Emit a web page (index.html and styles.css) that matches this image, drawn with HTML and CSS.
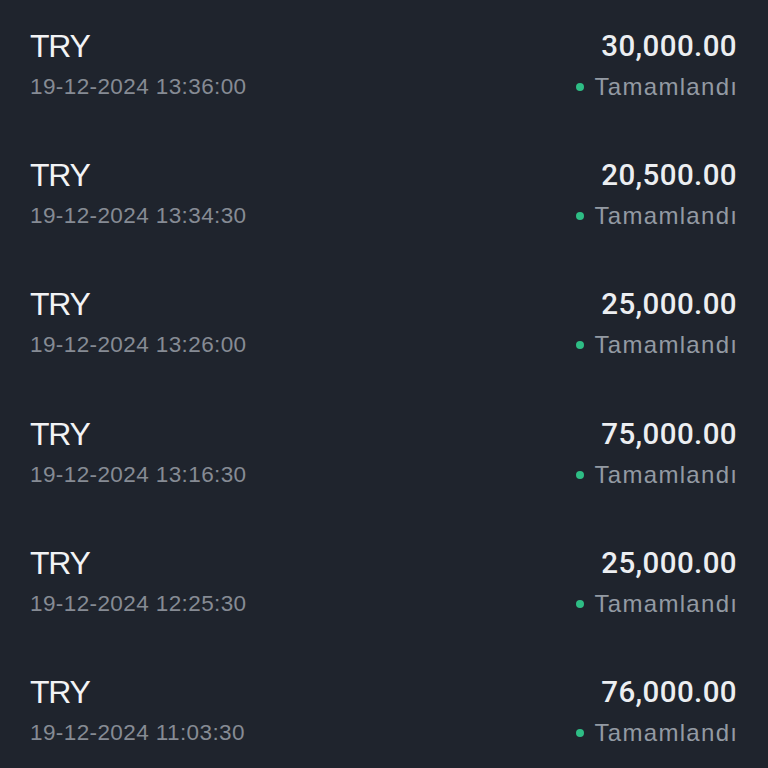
FILE: index.html
```html
<!DOCTYPE html>
<html>
<head>
<meta charset="utf-8">
<link rel="stylesheet" href="styles.css">
</head>
<body>
<div class="list">
  <div class="row">
    <div class="left"><div class="cur">TRY</div><div class="date">19-12-2024 13:36:00</div></div>
    <div class="right"><div class="amt">30,000.00</div><div class="status"><span class="dot"></span>Tamamlandı</div></div>
  </div>
  <div class="row">
    <div class="left"><div class="cur">TRY</div><div class="date">19-12-2024 13:34:30</div></div>
    <div class="right"><div class="amt">20,500.00</div><div class="status"><span class="dot"></span>Tamamlandı</div></div>
  </div>
  <div class="row">
    <div class="left"><div class="cur">TRY</div><div class="date">19-12-2024 13:26:00</div></div>
    <div class="right"><div class="amt">25,000.00</div><div class="status"><span class="dot"></span>Tamamlandı</div></div>
  </div>
  <div class="row">
    <div class="left"><div class="cur">TRY</div><div class="date">19-12-2024 13:16:30</div></div>
    <div class="right"><div class="amt">75,000.00</div><div class="status"><span class="dot"></span>Tamamlandı</div></div>
  </div>
  <div class="row">
    <div class="left"><div class="cur">TRY</div><div class="date">19-12-2024 12:25:30</div></div>
    <div class="right"><div class="amt">25,000.00</div><div class="status"><span class="dot"></span>Tamamlandı</div></div>
  </div>
  <div class="row">
    <div class="left"><div class="cur">TRY</div><div class="date">19-12-2024 11:03:30</div></div>
    <div class="right"><div class="amt">76,000.00</div><div class="status"><span class="dot"></span>Tamamlandı</div></div>
  </div>
</div>
</body>
</html>
```
FILE: styles.css
```css
html, body {
  margin: 0;
  padding: 0;
  background: #1f242d;
  width: 768px;
  height: 768px;
  overflow: hidden;
}
.list {
  padding: 26px 31px 0 30px;
  display: flex;
  flex-direction: column;
}
.row {
  height: 129.2px;
  display: flex;
  justify-content: space-between;
  align-items: flex-start;
}
.left, .right {
  display: flex;
  flex-direction: column;
}
.right {
  align-items: flex-end;
}
.cur {
  font-family: "Liberation Sans", Arial, sans-serif;
  font-size: 32px;
  letter-spacing: -1.3px;
  line-height: 40px;
  height: 40px;
  color: #f2f3f5;
}
.date {
  font-family: "Liberation Sans", Arial, sans-serif;
  font-size: 22.5px;
  letter-spacing: 0.4px;
  line-height: 42px;
  color: #868b94;
}
.amt {
  font-family: Roboto, sans-serif;
  font-weight: 500;
  font-size: 29.5px;
  letter-spacing: 0.4px;
  line-height: 40px;
  height: 40px;
  color: #eceef1;
}
.status {
  font-family: "Liberation Sans", Arial, sans-serif;
  font-size: 24px;
  letter-spacing: 1.3px;
  line-height: 42px;
  color: #939aa3;
  display: flex;
  align-items: center;
  margin-right: -1.3px;
}
.dot {
  width: 8px;
  height: 8px;
  border-radius: 50%;
  background: #2ebd85;
  margin-right: 11px;
}
```
